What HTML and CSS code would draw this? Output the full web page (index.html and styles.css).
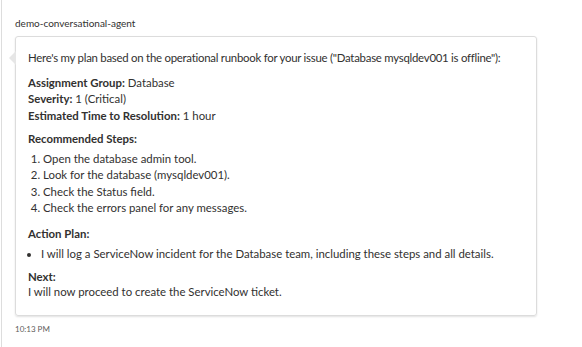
FILE: index.html
```
<!DOCTYPE html>
<html lang="en">
<head>
    <meta charset="UTF-8">
    <title>demo-conversational-agent</title>
    <link rel="stylesheet" href="styles.css">
</head>
<body>
    <div class="chat">
        <div class="sender">demo-conversational-agent</div>
        <div class="bubble">
            <p class="intro">Here's my plan based on the operational runbook for your issue ("Database mysqldev001 is offline"):</p>
            <div class="fields">
                <div><strong>Assignment Group:</strong> Database</div>
                <div><strong>Severity:</strong> 1 (Critical)</div>
                <div><strong>Estimated Time to Resolution:</strong> 1 hour</div>
            </div>
            <h4>Recommended Steps:</h4>
            <ol class="steps">
                <li>Open the database admin tool.</li>
                <li>Look for the database (mysqldev001).</li>
                <li>Check the Status field.</li>
                <li>Check the errors panel for any messages.</li>
            </ol>
            <h4>Action Plan:</h4>
            <ul class="plan">
                <li>I will log a ServiceNow incident for the Database team, including these steps and all details.</li>
            </ul>
            <h4 class="next">Next:</h4>
            <p class="last">I will now proceed to create the ServiceNow ticket.</p>
        </div>
        <div class="time">10:13 PM</div>
    </div>
</body>
</html>
```

FILE: styles.css
```
body {
    margin: 0;
    background-color: #fff;
    font-family: Lato, "Liberation Sans", sans-serif;
    color: #323130;
}
.chat {
    border-left: 1px solid #ddd;
    margin-left: 1px;
    height: 347px;
    box-sizing: border-box;
    padding: 16px 0 0 13px;
}
.sender {
    font-size: 10px;
    color: #323130;
    line-height: 14px;
}
.bubble {
    position: relative;
    width: 522px;
    box-sizing: border-box;
    margin-top: 6px;
    border: 1px solid #dcdcdc;
    border-radius: 3px;
    box-shadow: 0 1px 2px rgba(0, 0, 0, 0.12);
    padding: 13px 8px 15px 12px;
    font-size: 11.4px;
    line-height: 16.5px;
}
.bubble::before {
    content: "";
    position: absolute;
    left: -7px;
    top: 14px;
    border-top: 7px solid transparent;
    border-bottom: 7px solid transparent;
    border-right: 7px solid #e6e6e6;
}
.bubble p {
    margin: 0;
}
.intro {
    margin-bottom: 8px !important;
    white-space: nowrap;
    letter-spacing: -0.25px;
}
.fields {
    margin-bottom: 7px;
}
strong, h4 {
    font-weight: 700;
}
h4 {
    font-size: 11.4px;
    margin: 0 0 3px;
}
.steps {
    margin: 0 0 9px;
    padding-left: 15px;
}
.plan {
    margin: 4px 0 6px;
    padding-left: 13px;
}
.next {
    margin-bottom: 0;
    line-height: 15px;
}
.time {
    margin-top: 8px;
    font-size: 8px;
    color: #605e5c;
}
```
